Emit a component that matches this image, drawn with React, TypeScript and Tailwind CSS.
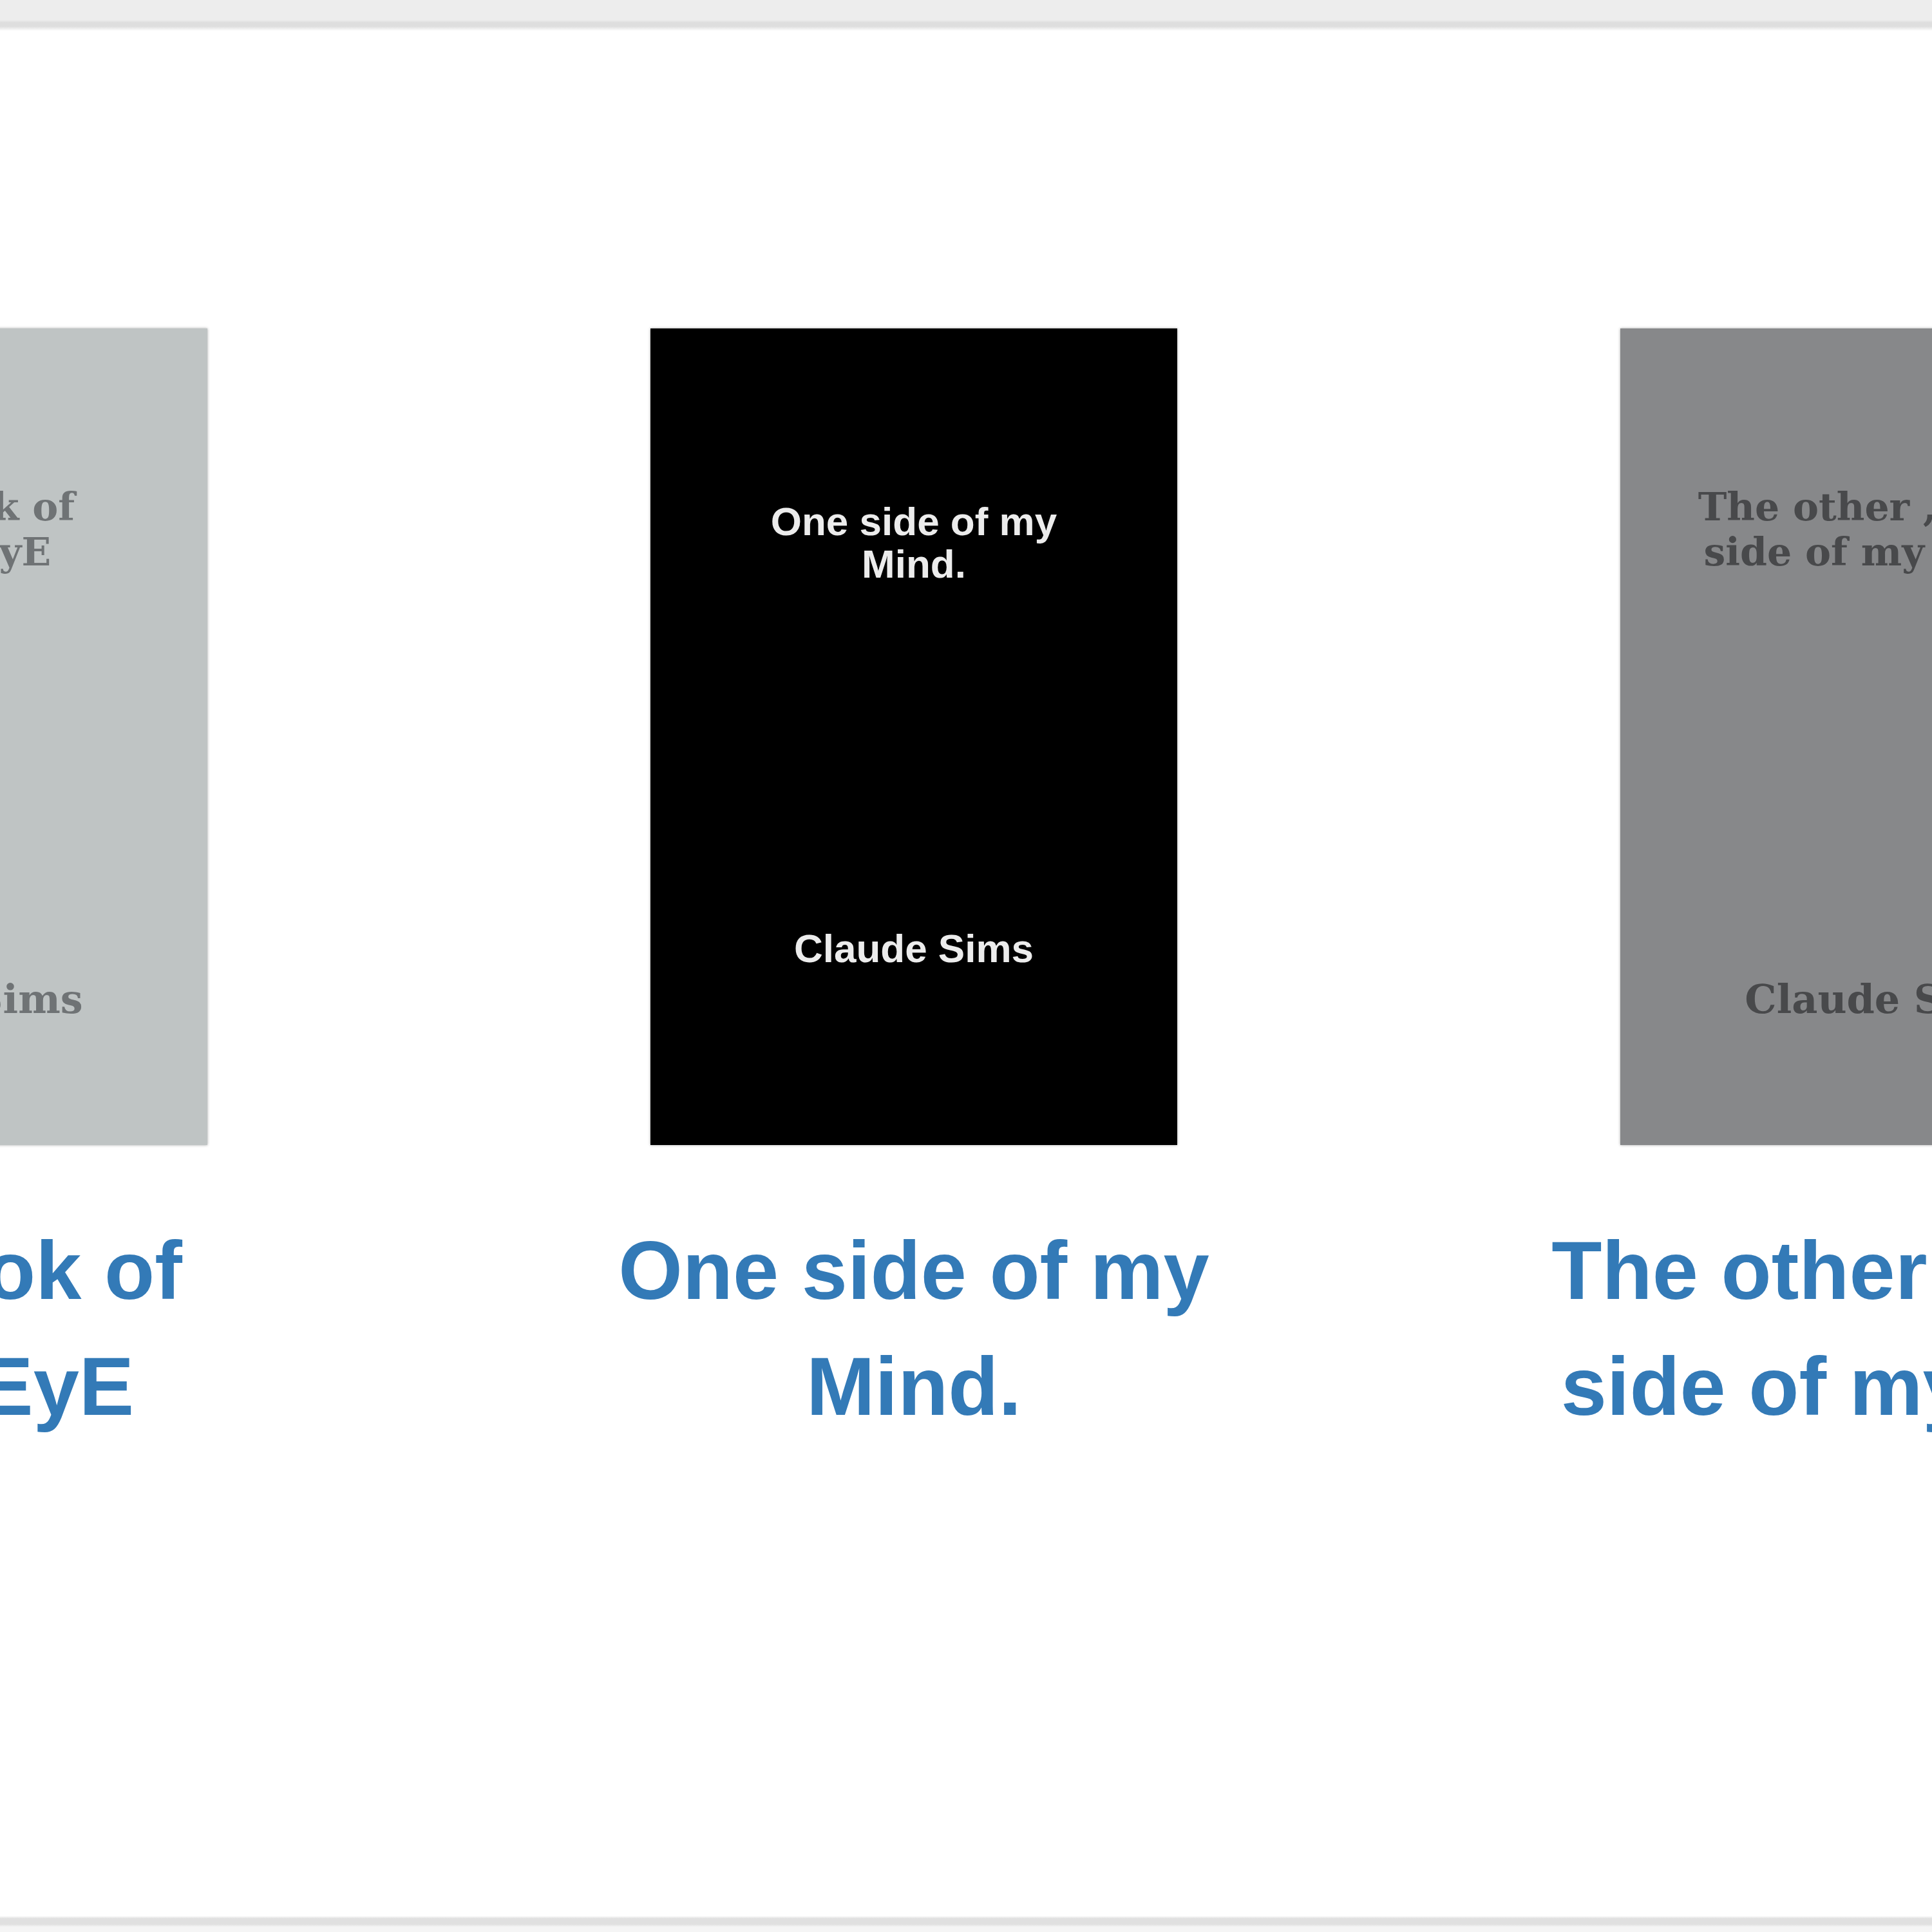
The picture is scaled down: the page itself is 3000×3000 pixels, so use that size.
type Book = {
  title: string;
  author: string;
  coverLines: string[];
  variant: 'light' | 'dark' | 'grey';
};

const books: Book[] = [
  { title: 'The Book of Inner EyE', author: 'Claude Sims', coverLines: ['The Book of', 'Inner EyE'], variant: 'light' },
  { title: 'One side of my Mind.', author: 'Claude Sims', coverLines: ['One side of my', 'Mind.'], variant: 'dark' },
  { title: 'The other , brave side of my Mind.', author: 'Claude Sims', coverLines: ['The other , brave', 'side of my Mind.'], variant: 'grey' },
];

function Cover({ book }: { book: Book }) {
  if (book.variant === 'dark') {
    return (
      <div className="w-[818px] h-[1268px] shrink-0 bg-black shadow-[0_0_4px_rgba(0,0,0,0.35)] flex flex-col items-center pt-[267px] pb-[272px] text-[#ececec] font-['Liberation_Sans',Arial,sans-serif] font-bold text-[62px] leading-[66px] text-center">
        <div>
          {book.coverLines.map((line) => (
            <div key={line} className="whitespace-nowrap">{line}</div>
          ))}
        </div>
        <div className="mt-auto whitespace-nowrap">{book.author}</div>
      </div>
    );
  }

  const tone =
    book.variant === 'light' ? 'bg-[#bfc4c4] text-[#6f7375]' : 'bg-[#87888a] text-[#48494b]';

  return (
    <div
      className={`w-[818px] h-[1268px] shrink-0 shadow-[0_0_4px_rgba(0,0,0,0.35)] flex flex-col items-center pt-[242px] pb-[190px] font-['DejaVu_Serif',serif] font-bold text-center ${tone}`}
    >
      <div className="text-[60px] leading-[70px]">
        {book.coverLines.map((line) => (
          <div key={line} className="whitespace-nowrap">{line}</div>
        ))}
      </div>
      <div className="mt-auto whitespace-nowrap text-[62px] leading-[72px]">{book.author}</div>
    </div>
  );
}

export default function App() {
  return (
    <div className="w-full h-[3000px] flex flex-col overflow-hidden bg-white">
      {/* top chrome */}
      <div className="h-[48px] shrink-0 bg-[linear-gradient(to_bottom,#ededed_0px,#ededed_31px,#dedede_35px,#dedede_41px,#ffffff_48px)]" />

      {/* carousel */}
      <main className="flex-1 overflow-hidden pt-[462px]">
        <div className="flex w-max -translate-x-[840px]">
          {books.map((book) => (
            <div key={book.title} className="w-[1506px] shrink-0 flex flex-col items-center">
              <Cover book={book} />
              <a
                href="#"
                className="mt-[105px] w-[1060px] text-center text-[128px] leading-[180px] font-bold text-[#337ab7] font-['Liberation_Sans',Arial,sans-serif]"
              >
                {book.title}
              </a>
            </div>
          ))}
        </div>
      </main>

      {/* bottom chrome */}
      <div className="h-[28px] shrink-0 bg-[linear-gradient(to_bottom,#ffffff_0px,#ffffff_3px,#e0e0e0_7px,#e0e0e0_16px,#f5f5f5_20px,#f5f5f5_28px)]" />
    </div>
  );
}
